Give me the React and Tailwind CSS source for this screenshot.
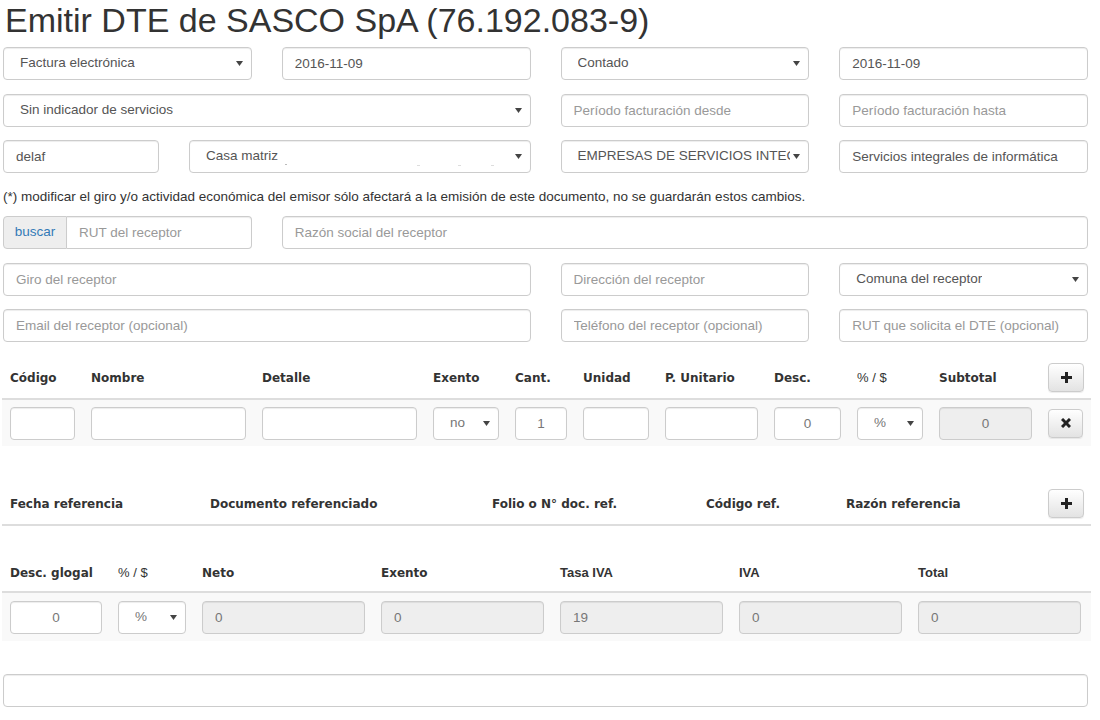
import React from "react";

const ctlBase =
  "h-[33px] rounded-[4px] border border-[#ccc] shadow-[inset_0_1px_1px_rgba(0,0,0,0.075)] text-[13.5px] outline-none placeholder:text-[#999] font-['Liberation_Sans',Arial,sans-serif]";

function Caret() {
  return (
    <svg width="7" height="5" viewBox="0 0 7 5" className="shrink-0">
      <polygon points="0,0 7,0 3.5,5" fill="#444" />
    </svg>
  );
}

function Input({ value, placeholder, className = "", align = "left", disabled, muted }) {
  const bg = disabled ? "bg-[#eee]" : "bg-white";
  const color = disabled || muted ? "text-[#777]" : "text-[#555]";
  return (
    <input
      readOnly
      defaultValue={value}
      placeholder={placeholder}
      className={`${ctlBase} ${bg} ${color} px-[12px] min-w-0 ${align === "center" ? "text-center" : ""} ${className}`}
    />
  );
}

function Select({ value, className = "", textClass = "text-[#555]", children }) {
  return (
    <div className={`${ctlBase} bg-white flex items-center justify-between pl-[16px] pr-[8px] min-w-0 ${className}`}>
      <div className={`overflow-hidden whitespace-nowrap ${textClass}`}>{children ?? value}</div>
      <Caret />
    </div>
  );
}

function Btn({ kind, className = "" }) {
  return (
    <div
      className={`w-[36px] rounded-[4px] border border-[#ccc] bg-gradient-to-b from-white to-[#e3e3e3] shadow-[0_1px_1px_rgba(0,0,0,0.075)] flex items-center justify-center ${className}`}
    >
      {kind === "plus" ? (
        <svg width="11" height="11" viewBox="0 0 11 11">
          <rect x="4" y="0" width="3" height="11" fill="#222" />
          <rect x="0" y="4" width="11" height="3" fill="#222" />
        </svg>
      ) : (
        <svg width="10" height="10" viewBox="0 0 10 10">
          <g stroke="#222" strokeWidth="3" strokeLinecap="butt">
            <line x1="1" y1="1" x2="9" y2="9" />
            <line x1="9" y1="1" x2="1" y2="9" />
          </g>
        </svg>
      )}
    </div>
  );
}

const th = "px-[8px] font-['DejaVu_Sans',sans-serif] font-bold text-[12px] text-[#333] whitespace-nowrap";
const th2 = "px-[8px] font-['Liberation_Sans',Arial,sans-serif] font-bold text-[13px] text-[#333] whitespace-nowrap";
const thn = "px-[8px] font-['Liberation_Sans',Arial,sans-serif] text-[13px] text-[#333] whitespace-nowrap";

const itemCols = "grid grid-cols-[81px_171px_171px_82px_68px_82px_109px_83px_82px_109px_51px]";
const refCols = "grid grid-cols-[200px_282px_214px_140px_202px_51px]";
const totCols = "grid grid-cols-[108px_84px_179px_179px_179px_179px_179px]";

export default function App() {
  return (
    <div className="w-[1100px] h-[720px] overflow-hidden bg-white font-['Liberation_Sans',Arial,sans-serif] text-[#333]">
      <h1 className="h-[40px] pl-[5px] text-[34px] leading-[40px] font-normal text-[#333] whitespace-nowrap">
        Emitir DTE de SASCO SpA (76.192.083-9)
      </h1>

      <div className="ml-[3px] w-[1085px] mt-[7px] flex flex-col gap-[13.5px]">
        <div className="flex gap-[30px]">
          <Select value="Factura electrónica" className="flex-1" />
          <Input value="2016-11-09" className="flex-1" />
          <Select value="Contado" className="flex-1" />
          <Input value="2016-11-09" className="flex-1" />
        </div>
        <div className="flex gap-[30px]">
          <Select value="Sin indicador de servicios" className="w-[527.5px]" />
          <Input placeholder="Período facturación desde" className="flex-1" />
          <Input placeholder="Período facturación hasta" className="flex-1" />
        </div>
        <div className="flex gap-[30px]">
          <div className="w-[527.5px] flex gap-[30px]">
            <Input value="delaf" className="w-[156px]" />
            <Select className="flex-1">
              <span className="flex items-end">
                Casa matriz
                <span className="inline-block w-[2px] h-[1px] bg-[#bbb] ml-[7px] mb-[2px]" />
                <span className="inline-block w-[3px] h-[1px] bg-[#ddd] ml-[130px] mb-[1px]" />
                <span className="inline-block w-[3px] h-[1px] bg-[#ddd] ml-[38px] mb-[1px]" />
                <span className="inline-block w-[3px] h-[1px] bg-[#ddd] ml-[30px] mb-[1px]" />
              </span>
            </Select>
          </div>
          <Select className="flex-1" textClass="w-[212px] text-[#555]">
            EMPRESAS DE SERVICIOS INTEGRALES DE INFORMÁTICA
          </Select>
          <Input value="Servicios integrales de informática" className="flex-1" />
        </div>
      </div>

      <p className="ml-[3px] mt-[14px] h-[20px] leading-[20px] text-[13.5px] text-[#333] whitespace-nowrap">
        (*) modificar el giro y/o actividad económica del emisor sólo afectará a la emisión de este documento, no se guardarán estos cambios.
      </p>

      <div className="ml-[3px] w-[1085px] mt-[9px] flex flex-col gap-[13.5px]">
        <div className="flex gap-[30px]">
          <div className="w-[248.75px] flex">
            <div className="h-[33px] w-[64px] shrink-0 flex items-center justify-center rounded-l-[4px] border border-[#ccc] bg-[#eee] text-[13.5px] text-[#337ab7]">
              buscar
            </div>
            <Input placeholder="RUT del receptor" className="flex-1 rounded-l-none border-l-0 w-0" />
          </div>
          <Input placeholder="Razón social del receptor" className="flex-1" />
        </div>
        <div className="flex gap-[30px]">
          <Input placeholder="Giro del receptor" className="w-[527.5px]" />
          <Input placeholder="Dirección del receptor" className="flex-1" />
          <Select value="Comuna del receptor" className="flex-1" />
        </div>
        <div className="flex gap-[30px]">
          <Input placeholder="Email del receptor (opcional)" className="w-[527.5px]" />
          <Input placeholder="Teléfono del receptor (opcional)" className="flex-1" />
          <Input placeholder="RUT que solicita el DTE (opcional)" className="flex-1" />
        </div>
      </div>

      {/* Items table */}
      <div className="ml-[2px] w-[1089px] mt-[15px]">
        <div className={`${itemCols} h-[43px] items-center border-b-2 border-[#ddd]`}>
          <div className={th}>Código</div>
          <div className={th}>Nombre</div>
          <div className={th}>Detalle</div>
          <div className={th}>Exento</div>
          <div className={th}>Cant.</div>
          <div className={th}>Unidad</div>
          <div className={th}>P. Unitario</div>
          <div className={th}>Desc.</div>
          <div className={thn}>% / $</div>
          <div className={th}>Subtotal</div>
          <div className="px-[8px]">
            <Btn kind="plus" className="h-[29px]" />
          </div>
        </div>
        <div className={`${itemCols} h-[46px] items-center bg-[#f9f9f9]`}>
          <div className="px-[8px] flex"><Input className="w-full h-[32px]" /></div>
          <div className="px-[8px] flex"><Input className="w-full h-[32px]" /></div>
          <div className="px-[8px] flex"><Input className="w-full h-[32px]" /></div>
          <div className="px-[8px] flex"><Select value="no" className="w-full h-[32px]" textClass="text-[#777]" /></div>
          <div className="px-[8px] flex"><Input value="1" align="center" muted className="w-full h-[32px]" /></div>
          <div className="px-[8px] flex"><Input className="w-full h-[32px]" /></div>
          <div className="px-[8px] flex"><Input className="w-full h-[32px]" /></div>
          <div className="px-[8px] flex"><Input value="0" align="center" muted className="w-full h-[32px]" /></div>
          <div className="px-[8px] flex"><Select value="%" className="w-full h-[32px]" textClass="text-[#777]" /></div>
          <div className="px-[8px] flex"><Input value="0" align="center" disabled className="w-full h-[32px]" /></div>
          <div className="px-[8px] flex"><Btn kind="x" className="h-[29px]" /></div>
        </div>
      </div>

      {/* References table */}
      <div className="ml-[2px] w-[1089px] mt-[37px]">
        <div className={`${refCols} h-[43px] items-center border-b-2 border-[#ddd]`}>
          <div className={th}>Fecha referencia</div>
          <div className={th}>Documento referenciado</div>
          <div className={th}>Folio o N° doc. ref.</div>
          <div className={th}>Código ref.</div>
          <div className={th}>Razón referencia</div>
          <div className="px-[8px]">
            <Btn kind="plus" className="h-[29px]" />
          </div>
        </div>
      </div>

      {/* Totals table */}
      <div className="ml-[2px] w-[1089px] mt-[29px]">
        <div className={`${totCols} h-[38px] items-center border-b-2 border-[#ddd]`}>
          <div className={th}>Desc. glogal</div>
          <div className={thn}>% / $</div>
          <div className={th}>Neto</div>
          <div className={th}>Exento</div>
          <div className={th2}>Tasa IVA</div>
          <div className={th2}>IVA</div>
          <div className={th2}>Total</div>
        </div>
        <div className={`${totCols} h-[48px] items-center bg-[#f9f9f9]`}>
          <div className="px-[8px] flex"><Input value="0" align="center" muted className="w-full" /></div>
          <div className="px-[8px] flex"><Select value="%" className="w-full" textClass="text-[#777]" /></div>
          <div className="px-[8px] flex"><Input value="0" disabled className="w-full" /></div>
          <div className="px-[8px] flex"><Input value="0" disabled className="w-full" /></div>
          <div className="px-[8px] flex"><Input value="19" disabled className="w-full" /></div>
          <div className="px-[8px] flex"><Input value="0" disabled className="w-full" /></div>
          <div className="px-[8px] flex"><Input value="0" disabled className="w-full" /></div>
        </div>
      </div>

      <div className="ml-[3px] w-[1085px] mt-[33px] flex">
        <Input className="w-full" />
      </div>
    </div>
  );
}
